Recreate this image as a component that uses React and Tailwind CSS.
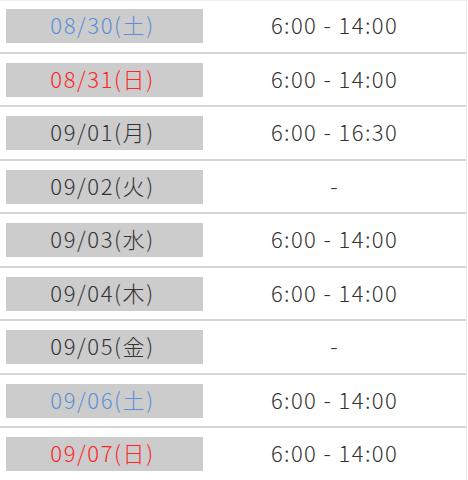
import React from 'react';

const rows = [
  { date: '08/30(土)', time: '6:00 - 14:00', tone: 'sat' },
  { date: '08/31(日)', time: '6:00 - 14:00', tone: 'sun' },
  { date: '09/01(月)', time: '6:00 - 16:30' },
  { date: '09/02(火)', time: '-' },
  { date: '09/03(水)', time: '6:00 - 14:00' },
  { date: '09/04(木)', time: '6:00 - 14:00' },
  { date: '09/05(金)', time: '-' },
  { date: '09/06(土)', time: '6:00 - 14:00', tone: 'sat' },
  { date: '09/07(日)', time: '6:00 - 14:00', tone: 'sun' },
];

const toneClass = {
  sat: 'text-[#5b8fd9]',
  sun: 'text-[#ff2323]',
};

export default function App() {
  return (
    <div
      className="w-[468px] h-[480px] bg-white overflow-hidden"
      style={{ fontFamily: '"Noto Sans CJK JP", "Noto Sans", sans-serif' }}
    >
      <div className="w-[467px] border-r border-[#ececec] shadow-[inset_0_1px_0_#ededed]">
        {rows.map((r) => (
          <div key={r.date} className="flex items-center pl-[6px] pt-[9px] pb-[8.5px] border-b-2 border-[#d6d6d6]">
            {/* date cell */}
            <div
              className={`w-[197px] h-[34px] pb-[4px] pr-[4px] bg-[#cccccc] flex items-center justify-center text-[22px] leading-none font-light tracking-[1.6px] ${
                toneClass[r.tone] || 'text-[#333333]'
              }`}
            >
              {r.date}
            </div>
            {/* hours */}
            <div className="flex-1 h-[34px] pb-[4px] flex items-center justify-center text-[22px] leading-none font-light tracking-[1.4px] text-[#333333]">
              {r.time}
            </div>
          </div>
        ))}
      </div>
    </div>
  );
}
